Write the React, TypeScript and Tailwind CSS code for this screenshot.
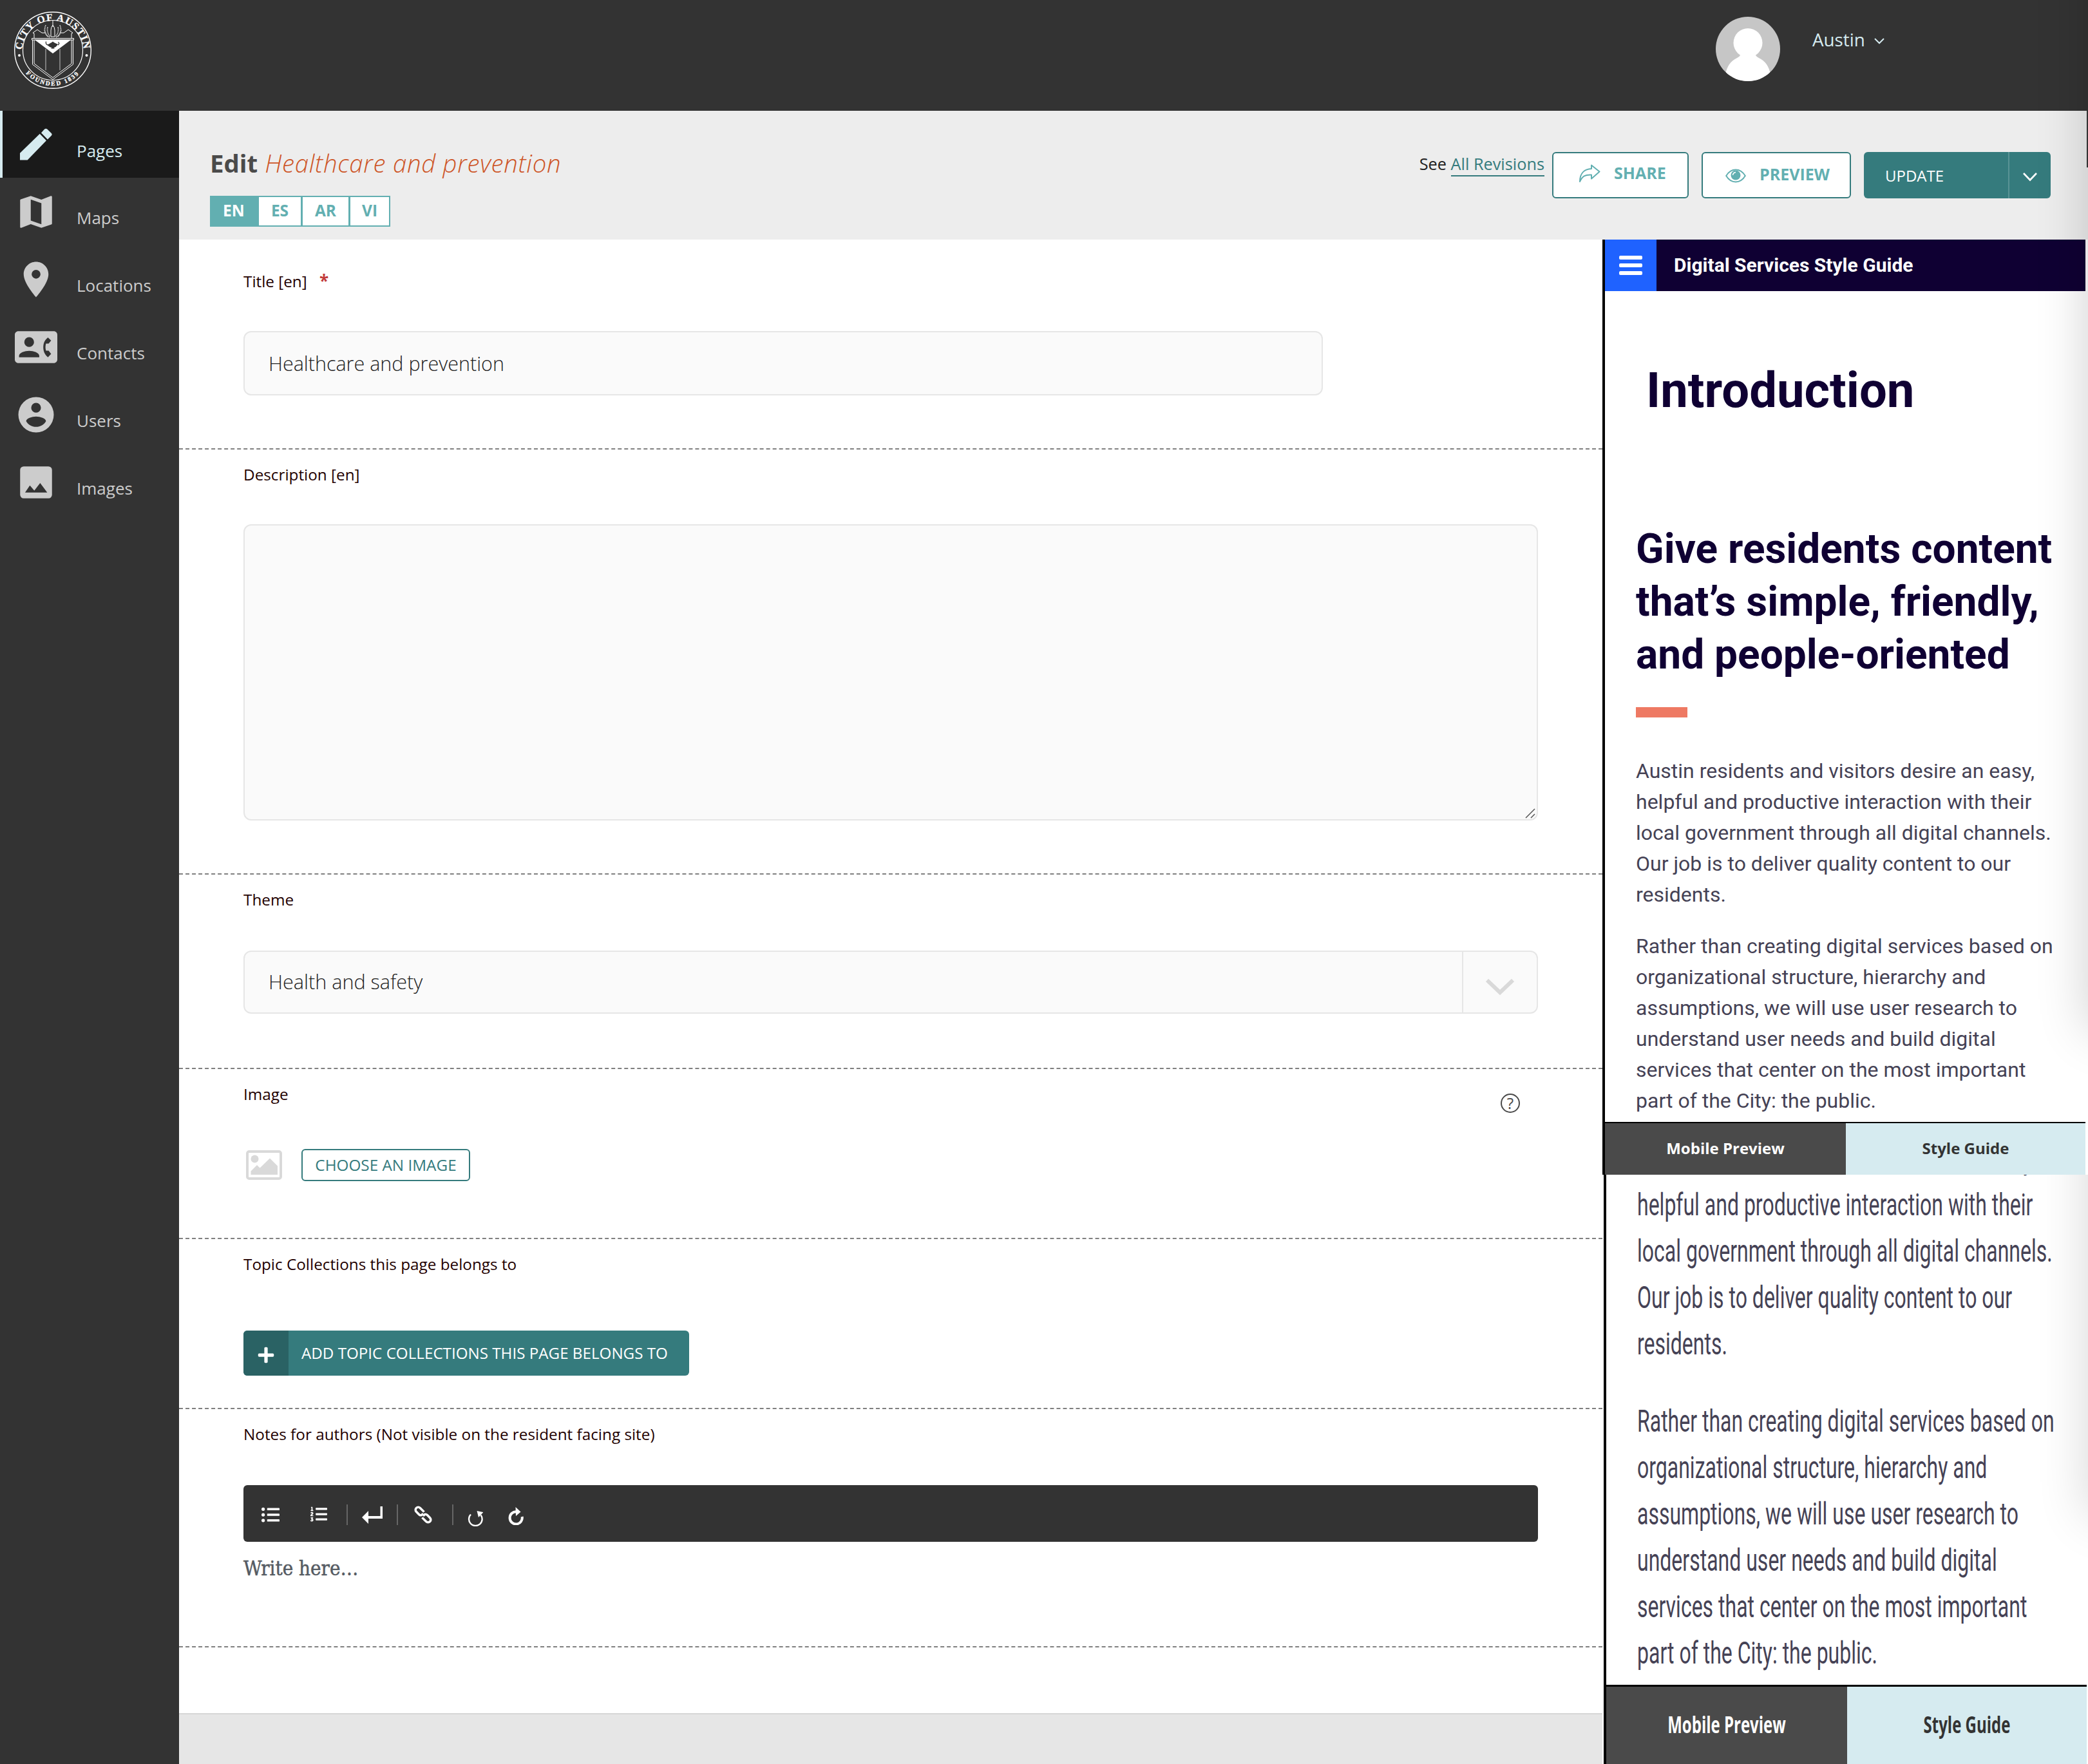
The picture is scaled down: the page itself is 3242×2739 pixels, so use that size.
import React from "react";
import { FaListUl, FaListOl, FaPlus } from "react-icons/fa";
import { MdMap, MdLocationOn } from "react-icons/md";

const paragraphs = [
  ["Austin residents and visitors desire an easy,", "helpful and productive interaction with their", "local government through all digital channels.", "Our job is to deliver quality content to our", "residents."],
  ["Rather than creating digital services based on", "organizational structure, hierarchy and", "assumptions, we will use user research to", "understand user needs and build digital", "services that center on the most important", "part of the City: the public."],
];

function PencilIcon() {
  return (
    <svg viewBox="0 0 24 24" className="size-[66px]" fill="currentColor">
      <path d="M2.9 20.9V17L14.1 6.1l3.7 3.8L7.15 20.9zM14.9 5.5l1.8-2Q17.5 2.8 18.4 3.5l2.3 2.3q.6.6 0 1.3l-2.2 2.2z" />
    </svg>
  );
}

function ContactIcon() {
  return (
    <svg viewBox="0 0 24 24" className="size-[66px]" fill="currentColor" fillRule="evenodd">
      <path d="M22 3H2C.9 3 0 3.9 0 5v14c0 1.1.9 2 2 2h20c1.1 0 2-.9 2-2V5c0-1.1-.9-2-2-2zM8.100 6.400a2.750 2.750 0 1 1 0 5.500a2.750 2.750 0 1 1 0-5.500zM13.800 17.700H2.400v-.8c0-1.700 3.200-2.800 5.700-2.800s5.700 1.100 5.700 2.800zM17.600 14h1.500l1.400 1.800-1.800 1.900c-1.300-1-2.050-2.250-2.400-3.700-.3-1.300-.3-2.600 0-3.900.35-1.450 1.100-2.600 2.400-3.600l1.800 1.800L19.100 10h-1.500c-.4 1.300-.4 2.700 0 4z" />
    </svg>
  );
}

function UserIcon() {
  return (
    <svg viewBox="0 0 24 24" className="size-[66px]" fill="currentColor" fillRule="evenodd">
      <path d="M12 2a10 10 0 1 0 0 20a10 10 0 1 0 0-20zM12 5.300a2.750 2.750 0 1 1 0 5.500a2.750 2.750 0 1 1 0-5.500zM12 18.800c-2.300 0-4.500-1.200-5.600-3.200 0-1.500 3.300-2.600 5.600-2.600s5.600 1.100 5.600 2.600c-1.100 2-3.300 3.200-5.600 3.200z" />
    </svg>
  );
}

function PictureIcon() {
  return (
    <svg viewBox="0 0 24 24" className="size-[66px]" fill="currentColor" fillRule="evenodd">
      <path d="M5 3h14a2 2 0 0 1 2 2v14a2 2 0 0 1-2 2H5a2 2 0 0 1-2-2V5a2 2 0 0 1 2-2zM5.800 17.700h12.500l-4-5.300-3.300 4.200-2.500-2.900z" />
    </svg>
  );
}

function Seal() {
  return (
    <svg viewBox="0 0 120 120" className="size-[120px]" fill="none" stroke="#fff">
      <defs>
        <path id="seal-top" d="M12 62a48 48 0 0 1 96 0" />
        <path id="seal-bottom" d="M5 60a55 55 0 0 0 110 0" />
      </defs>
      <circle cx="60" cy="60" r="59.300" strokeWidth="1.400" />
      <circle cx="60" cy="60" r="46.500" strokeWidth="1.200" />
      <circle cx="8" cy="68" r="2" fill="#fff" stroke="none" />
      <circle cx="112.500" cy="68" r="2" fill="#fff" stroke="none" />
      <g fill="#fff" stroke="#fff" strokeWidth=".3" fontFamily="Liberation Serif" fontWeight="700" textAnchor="middle">
        <text fontSize="15.500" letterSpacing="1.500"><textPath href="#seal-top" startOffset="50%">CITY OF AUSTIN</textPath></text>
        <text fontSize="9.500" letterSpacing="2.200"><textPath href="#seal-bottom" startOffset="50%">FOUNDED 1839</textPath></text>
      </g>
      <path d="M27.500 41.500h65v2.500h-65z" strokeWidth="1" />
      <path d="M28.500 44v38L60 105.500 91.500 82V44M31 44v36.700L60 102.500 89 80.700V44" strokeWidth="1" />
      <path d="M49 58v33M71 58v33" strokeWidth=".9" opacity=".8" />
      <path d="M31.500 43.500h57L60 65z" fill="#fff" stroke="none" />
      <path d="M49.500 46.500q-1 5 3.500 5.500M68 47.500q3.500 1 0 4.500" stroke="#333" strokeWidth="1.300" />
      <path d="M51 51q3 0 5-2 2-1 4-2.500 2 1.500 4 2.500 2 1 4 1.500-3 5-6.500 5.500l1.500 1.500h-6l1.500-1.500q-4-.5-7.500-5z" fill="#333" stroke="none" />
      <path d="M31 41V34l-2-1 7-5 7 5h5M89 41V34l2-1-7-5-7 5h-5" strokeWidth="1" />
      <path d="M60 14v10M57 29q0-5 3-8 3 3 3 8v10h-6z" strokeWidth="1" />
      <path d="M49 21q-4 10 3 18M71 21q4 10-3 18M52 24q-2 8 4 15M68 24q2 8-4 15M47 28q2 9 8 12M73 28q-2 9-8 12" strokeWidth="1.600" strokeDasharray="1.500 .8" opacity=".8" />
    </svg>
  );
}

const nav = [
  { label: "Pages", icon: <PencilIcon />, active: true },
  { label: "Maps", icon: <MdMap className="size-[66px]" /> },
  { label: "Locations", icon: <MdLocationOn className="size-[66px]" /> },
  { label: "Contacts", icon: <ContactIcon /> },
  { label: "Users", icon: <UserIcon /> },
  { label: "Images", icon: <PictureIcon /> },
];

function Sidebar() {
  return (
    <aside className="flex w-[278px] shrink-0 flex-col bg-[#333]">
      {nav.map((n) => (
        <div
          key={n.label}
          className={
            n.active
              ? "flex h-[104px] items-start border-l-4 border-[#d6ebf0] bg-[#1a1a1a] pl-[19px] pt-[19px] text-[#d6ebf0]"
              : "flex h-[105px] items-start pl-[23px] pt-[20px] text-[#ccc]"
          }
        >
          {n.icon}
          <span className={n.active ? "ml-[30px] mt-[25px] text-[26px] leading-[36px]" : "ml-[30px] mt-[24px] text-[26px] leading-[36px]"}>{n.label}</span>
        </div>
      ))}
    </aside>
  );
}

function TopBar() {
  return (
    <header className="flex h-[172px] items-start justify-between bg-[#333] pl-[22px] pr-[316px]">
      <div className="mt-[18px]"><Seal /></div>
      <div className="flex items-start">
        <svg viewBox="0 0 100 100" className="mt-[26px] size-[100px] rounded-full bg-[#c6c6c6]" fill="#fff">
          <ellipse cx="50" cy="40.500" rx="22.500" ry="22.500" />
          <path d="M38 55Q40 61 33 64Q18 71 15 90V100H85V90Q82 71 67 64Q60 61 62 55z" />
        </svg>
        <span className="ml-[50px] mt-[42px] w-[81px] whitespace-nowrap text-[27.800px] leading-[38px] text-[#d6ebf0]">Austin</span>
        <svg viewBox="0 0 16 10" className="ml-[15px] mt-[59px] h-[10px] w-[16px]" fill="none" stroke="#d6ebf0" strokeWidth="2">
          <path d="M1 1l7 7 7-7" />
        </svg>
      </div>
    </header>
  );
}

function EditHeader() {
  return (
    <div className="flex h-[200px] shrink-0 justify-between bg-[#ededed] pl-[48px] pr-[58px]">
      <div className="flex flex-col">
        <h1 className="mt-[53px] whitespace-nowrap text-[38.400px] font-bold leading-[56px] text-[#4a4a4a]">
          Edit <em className="ml-px font-light tracking-[0.7px] text-[#cd5527]">Healthcare and prevention</em>
        </h1>
        <div className="mt-[23px] flex h-[48px] w-[280px] bg-[#62afb1] p-[2px] text-[24.500px] font-bold leading-[42px] text-[#62afb1]">
          <span className="w-[74px] pl-[18px] text-white">EN</span>
          <span className="w-[65px] bg-white text-center">ES</span>
          <span className="ml-[3px] w-[71px] bg-white text-center">AR</span>
          <span className="ml-[3px] w-[60px] bg-white text-center">VI</span>
        </div>
      </div>
      <div className="flex items-start">
        <div className="mt-[65px] whitespace-nowrap text-[25.300px] leading-[34px] text-[#222]">
          See <span className="inline-block border-b-2 border-[#357b7d] pb-px text-[#357b7d]">All Revisions</span>
        </div>
        <button className="ml-[12px] mt-[64px] flex h-[72px] w-[212px] rounded-[6px] border-2 border-[#357b7d] bg-white pl-[39px] text-[25px] font-bold text-[#62afb1]">
          <svg viewBox="0 0 34 28" className="mt-[17px] h-[28px] w-[34px]" fill="none" stroke="currentColor" strokeWidth="2" strokeLinejoin="round">
            <path d="M20 1.500L32.500 11.500 20 22.500v-6C10 16 6 18.500 2 27 2 13 10 7.500 20 7z" />
          </svg>
          <span className="ml-[21px] mt-[13px] leading-[34px]">SHARE</span>
        </button>
        <button className="ml-[20px] mt-[64px] flex h-[72px] w-[232px] rounded-[6px] border-2 border-[#357b7d] bg-white pl-[35px] text-[25px] font-bold text-[#62afb1]">
          <svg viewBox="0 0 32 22" className="mt-[24px] h-[22px] w-[32px]" fill="none" stroke="currentColor" strokeWidth="2">
            <path d="M1.200 11Q7 1.500 16 1.500T30.800 11Q25 20.500 16 20.500T1.200 11z" />
            <circle cx="16" cy="10" r="7.500" fill="currentColor" stroke="none" />
            <path d="M11.500 10Q12 6 16 5.500" stroke="#fff" strokeWidth="1.500" />
          </svg>
          <span className="ml-[21px] mt-[15px] leading-[34px]">PREVIEW</span>
        </button>
        <div className="ml-[20px] mt-[64px] flex h-[72px] w-[290px] rounded-[6px] bg-[#357b7d] text-white">
          <span className="w-[224px] pl-[33px] pt-[20px] text-[24px] leading-[34px]">UPDATE</span>
          <span className="flex flex-1 items-center justify-center border-l-2 border-[#5a9496]">
            <svg viewBox="0 0 22 14" className="mt-[5px] h-[14px] w-[22px]" fill="none" stroke="#fff" strokeWidth="2.600">
              <path d="M1 1l10 10.500L21 1" />
            </svg>
          </span>
        </div>
      </div>
    </div>
  );
}

function Label({ children }: { children: React.ReactNode }) {
  return <div className="whitespace-nowrap text-[24.300px] leading-[34px] text-[#1f0000]">{children}</div>;
}

function Dash() {
  return <div className="h-[2px] shrink-0 border-t-2 border-dashed border-[#808080]" />;
}

function Toolbar() {
  return (
    <div className="mt-[62px] flex h-[88px] items-start rounded-[6px] bg-[#333] pl-[28px] text-white">
      <FaListUl className="mt-[32px] size-[28px]" />
      <FaListOl className="ml-[48px] mt-[32px] size-[26px]" />
      <i className="ml-[30px] mt-[30px] h-[32px] w-[2px] bg-[#666]" />
      <svg viewBox="0 0 32 27" className="ml-[22px] mt-[33px] h-[27px] w-[32px]" fill="#fff">
        <path d="M28.500 0H32V19H10v8L0 17 10 7v8H28.500z" />
      </svg>
      <i className="ml-[22px] mt-[30px] h-[32px] w-[2px] bg-[#666]" />
      <svg viewBox="0 0 28 28" className="ml-[25px] mt-[32px] size-[28px]" fill="none" stroke="#fff" strokeWidth="3.500">
        <g transform="rotate(45 14 14)">
          <path d="M12 9.800H3.200a4.200 4.200 0 0 0-4.200 4.200v0a4.200 4.200 0 0 0 4.200 4.200H9a4.200 4.200 0 0 0 4-3.200" />
          <path d="M16 18.200h8.800a4.200 4.200 0 0 0 4.200-4.200v0a4.200 4.200 0 0 0-4.200-4.200H19a4.200 4.200 0 0 0-4 3.200" />
          <path d="M11 14h6" strokeWidth="2.600" />
        </g>
      </svg>
      <i className="ml-[31px] mt-[30px] h-[32px] w-[2px] bg-[#666]" />
      <svg viewBox="0 0 24 24" className="ml-[22px] mt-[40px] size-[24px]" fill="none" stroke="#fff" strokeWidth="2.400">
        <path d="M5 5.500A10.300 10.300 0 1 0 20.500 6.500" />
        <path d="M14.500 0L24.500 2 17 10z" fill="#fff" stroke="none" />
      </svg>
      <svg viewBox="0 0 24 28" className="ml-[39px] mt-[34px] h-[28px] w-[24px]" fill="none" stroke="#fff" strokeWidth="4">
        <path d="M13 7.300A9.600 9.600 0 1 0 21.600 15" />
        <path d="M11.500 0L19.500 7.500 12 14z" fill="#fff" stroke="none" />
      </svg>
    </div>
  );
}

function Form() {
  return (
    <div className="flex flex-1 flex-col bg-white">
      <section className="h-[324px] pl-[100px] pr-[100px] pt-[48px]">
        <Label>Title [en] <b className="ml-[13px] text-[26px] leading-none text-[#c23b3b]">*</b></Label>
        <div className="mt-[60px] h-[100px] w-[1676px] rounded-[12px] border-2 border-[#e6e6e6] bg-[#fafafa] pl-[37px] text-[30.500px] font-light leading-[96px] text-[#222]">
          Healthcare and prevention
        </div>
      </section>
      <Dash />
      <section className="h-[658px] pl-[100px] pr-[100px] pt-[22px]">
        <Label>Description [en]</Label>
        <div className="mt-[60px] flex h-[460px] items-end justify-end rounded-[12px] border-2 border-[#e6e6e6] bg-[#fafafa]">
          <svg viewBox="0 0 16 16" className="mb-[1px] mr-[2px] size-[16px]" fill="none" stroke="#555" strokeWidth="1.500">
            <path d="M1 15L15 1M9 15l6-6" />
          </svg>
        </div>
      </section>
      <Dash />
      <section className="h-[300px] pl-[100px] pr-[100px] pt-[22px]">
        <Label>Theme</Label>
        <div className="mt-[62px] flex h-[98px] rounded-[12px] border-2 border-[#e6e6e6] bg-[#fafafa]">
          <span className="flex-1 pl-[37px] text-[30.600px] font-light leading-[93px] text-[#222]">Health and safety</span>
          <span className="flex w-[116px] justify-center border-l-2 border-[#e6e6e6]">
            <svg viewBox="0 0 44 26" className="mt-[42px] h-[26px] w-[44px]" fill="none" stroke="#d9d9d9" strokeWidth="6">
              <path d="M2 2l20 19L42 2" />
            </svg>
          </span>
        </div>
      </section>
      <Dash />
      <section className="h-[262px] pl-[100px] pt-[22px]">
        <div className="flex h-[34px] items-start justify-between pr-[128px]">
          <Label>Image</Label>
          <span className="mt-[16px] flex size-[30px] items-center justify-center rounded-full border-2 border-[#4a4a4a] text-[24px] leading-none text-[#4a4a4a]">?</span>
        </div>
        <div className="mt-[68px] flex items-center">
          <svg viewBox="0 0 56 46" className="ml-[4px] h-[46px] w-[56px]" fill="#d9d9d9">
            <rect x="2" y="2" width="52" height="42" rx="3" fill="none" stroke="#d9d9d9" strokeWidth="4" />
            <circle cx="13.500" cy="13.500" r="6" />
            <path d="M7.500 38V32.500L17 23l4.500 4.500L37 12.500 49 24.500V38z" />
          </svg>
          <span className="ml-[30px] h-[50px] w-[262px] rounded-[6px] border-2 border-[#357b7d] text-center text-[24.300px] leading-[46px] text-[#357b7d]">CHOOSE AN IMAGE</span>
        </div>
      </section>
      <Dash />
      <section className="h-[262px] pl-[100px] pt-[22px]">
        <Label>Topic Collections this page belongs to</Label>
        <div className="mt-[86px] flex h-[70px] w-[692px] overflow-hidden rounded-[6px] bg-[#357b7d] text-white">
          <span className="flex w-[70px] items-center justify-center bg-[#2a6264]"><FaPlus className="mt-[6px] size-[28px]" /></span>
          <span className="whitespace-nowrap pl-[20px] text-[24.200px] leading-[70px]">ADD TOPIC COLLECTIONS THIS PAGE BELONGS TO</span>
        </div>
      </section>
      <Dash />
      <section className="flex h-[368px] flex-col pl-[100px] pr-[100px] pt-[22px]">
        <Label>Notes for authors (Not visible on the resident facing site)</Label>
        <Toolbar />
        <div className="mt-[20px] whitespace-nowrap font-['DejaVu_Serif_Condensed','DejaVu_Serif',serif] text-[31px] leading-[42px] text-[#555b63] [-webkit-text-stroke:0.5px_#555b63]">Write here…</div>
      </section>
      <Dash />
      <div className="h-[102px]" />
      <div className="flex-1 border-t-2 border-[#d6d6d6] bg-[#e6e6e6]" />
    </div>
  );
}

function StyleGuideTabs() {
  return (
    <div className="flex h-[82px] shrink-0 border-t-2 border-black text-center font-['Open_Sans',sans-serif] text-[24px] font-bold leading-[77px]">
      <span className="w-[374px] bg-[#4a4a4a] text-white">Mobile Preview</span>
      <span className="flex-1 bg-[#d6ebf0] text-[#333]">Style Guide</span>
    </div>
  );
}

function GuideText() {
  return (
    <div className="ml-[48px] flex flex-col gap-[32px] whitespace-nowrap text-[32px] leading-[48px] text-[#454255]">
      {paragraphs.map((p) => (
        <div key={p[0]}>{p.map((l) => <div key={l}>{l}</div>)}</div>
      ))}
    </div>
  );
}

function StyleGuidePanel() {
  return (
    <div className="flex h-[1452px] w-[750px] shrink-0 flex-col border-l-4 border-black bg-white font-[Roboto,sans-serif]">
      <div className="flex h-[80px] shrink-0 items-center bg-[#0f0033]">
        <div className="flex size-[80px] flex-col items-center justify-center gap-[6px] bg-[#1f62ff]">
          <i className="h-[6px] w-[36px] rounded-[2px] bg-white" />
          <i className="h-[6px] w-[36px] rounded-[2px] bg-white" />
          <i className="h-[6px] w-[36px] rounded-[2px] bg-white" />
        </div>
        <span className="-mt-px ml-[27px] whitespace-nowrap text-[30px] font-bold text-white">Digital Services Style Guide</span>
      </div>
      <h2 className="ml-[64px] mt-[108px] whitespace-nowrap text-[76px] font-bold leading-[92px] text-[#0f0033]">Introduction</h2>
      <h3 className="ml-[48px] mt-[160px] whitespace-nowrap text-[64px] font-bold leading-[82px] text-[#0f0033]">
        Give residents content<br />that’s simple, friendly,<br />and people-oriented
      </h3>
      <div className="mb-[59px] ml-[48px] mt-[40px] h-[16px] w-[80px] shrink-0 bg-[#ee7963]" />
      <GuideText />
      <div className="mt-auto"><StyleGuideTabs /></div>
    </div>
  );
}

/* The lower part of the panel, drawn at one and a half times its height. */
function StretchedPanel() {
  return (
    <div className="flex h-[915px] flex-col justify-end overflow-hidden pl-[2px]">
      <div className="flex w-[750px] origin-bottom scale-y-150 flex-col justify-end border-l-4 border-black bg-white font-[Roboto,sans-serif]">
        <GuideText />
        <div className="mt-[9px]"><StyleGuideTabs /></div>
      </div>
    </div>
  );
}

export default function App() {
  return (
    <div className="relative flex h-[2739px] w-[3242px] flex-col overflow-hidden bg-white font-['Open_Sans',sans-serif]">
      <TopBar />
      <div className="flex flex-1">
        <Sidebar />
        <div className="flex flex-1 flex-col">
          <EditHeader />
          <div className="flex flex-1">
            <Form />
            <div className="flex w-[754px] flex-col">
              <StyleGuidePanel />
              <div className="relative overflow-hidden">
                <StretchedPanel />
                <div className="pointer-events-none absolute -top-[400px] left-full h-[930px] w-[200px] shadow-[0_0_80px_rgba(0,0,0,0.16)]" />
              </div>
            </div>
          </div>
        </div>
      </div>
      <div className="pointer-events-none absolute -top-[100px] left-full h-[1700px] w-[200px] shadow-[0_0_80px_rgba(0,0,0,0.19)]" />
      <div className="pointer-events-none absolute left-[3240px] top-[172px] h-[88px] w-[2px] bg-[#333]" />
    </div>
  );
}
